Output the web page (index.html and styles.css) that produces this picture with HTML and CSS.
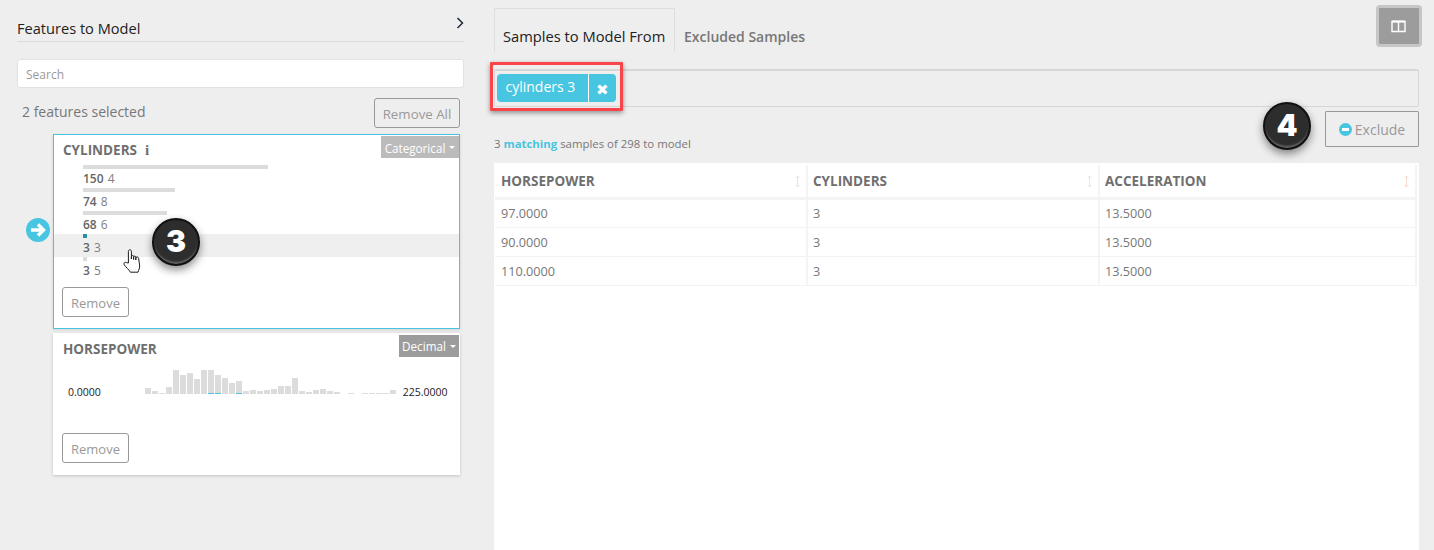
FILE: index.html
```html
<!DOCTYPE html>
<html lang="en">
<head>
    <meta charset="UTF-8">
    <meta name="viewport" content="width=device-width, initial-scale=1.0">
    <title>Features to Model</title>
    <link rel="stylesheet" href="styles.css">
</head>
<body>
    <div class="page">
        <div class="features-panel">
            <div class="features-head">
                <h1>Features to Model</h1>
                <svg class="collapse-icon" width="8" height="12" viewBox="0 0 8 12"><path d="M1.5 1 L6.5 6 L1.5 11" fill="none" stroke="#1d2b3a" stroke-width="1.5"/></svg>
            </div>
            <input class="search-input" type="text" placeholder="Search">
            <div class="selected-row">
                <span class="selected-count">2 features selected</span>
                <button class="btn remove-all">Remove All</button>
            </div>

            <div class="feature-wrap">
                <svg class="current-arrow" width="26" height="26" viewBox="0 0 26 26">
                    <circle cx="13" cy="13" r="12" fill="#48c5e0"/>
                    <path d="M6 13 H18 M13 7.5 L18.5 13 L13 18.5" fill="none" stroke="#fff" stroke-width="3.4"/>
                </svg>
                <div class="feature-card active">
                    <div class="feature-title">
                        <span>CYLINDERS</span>
                        <span class="info-mark">i</span>
                        <span class="type-tag light">Categorical <i class="caret"></i></span>
                    </div>
                    <div class="cat-list">
                        <div class="cat-row"><div class="cat-bar" style="width:185px"></div><div class="cat-text"><b>150</b> 4</div></div>
                        <div class="cat-row"><div class="cat-bar" style="width:92px"></div><div class="cat-text"><b>74</b> 8</div></div>
                        <div class="cat-row"><div class="cat-bar" style="width:84px"></div><div class="cat-text"><b>68</b> 6</div></div>
                        <div class="cat-row hover"><div class="cat-bar teal" style="width:4px"></div><div class="cat-text"><b>3</b> 3</div></div>
                        <div class="cat-row"><div class="cat-bar" style="width:4px"></div><div class="cat-text"><b>3</b> 5</div></div>
                    </div>
                    <button class="btn remove">Remove</button>
                    <svg class="hand-cursor" width="18" height="24" viewBox="0 0 18 24">
                        <path d="M5.4 14 V2.4 C5.4 .2 8.4 .2 8.4 2.4 V10 V7.6 C8.4 6 10.6 6 10.6 7.6 V10.5 V8.2 C10.6 6.8 12.8 6.8 12.8 8.2 V11 V9 C12.8 7.6 15.4 7.6 15.6 9.2 L16.6 16 C17 19 15.6 21 15 23.2 H7.4 C6 20.6 3.2 18.6 1.2 15.8 C.2 14.2 2 12.6 3.4 13.6 Z" fill="#fff" stroke="#1c1c1c" stroke-width="1" stroke-linejoin="round"/>
                    </svg>
                    <div class="step-badge step-three">3</div>
                </div>
            </div>

            <div class="feature-wrap">
                <div class="feature-card second">
                    <div class="feature-title">
                        <span>HORSEPOWER</span>
                        <span class="type-tag dark">Decimal <i class="caret"></i></span>
                    </div>
                    <div class="histogram-row">
                        <span class="range-val">0.0000</span>
                        <div class="histogram" id="histogram"></div>
                        <span class="range-val">225.0000</span>
                    </div>
                    <button class="btn remove">Remove</button>
                </div>
            </div>
        </div>

        <div class="samples-panel">
            <div class="tabs">
                <div class="tab active">Samples to Model From</div>
                <div class="tab">Excluded Samples</div>
                <button class="layout-toggle">
                    <svg width="15" height="13" viewBox="0 0 15 13"><path d="M1 1.5 H14 V11.5 H1 Z M7.5 1.5 V11.5" fill="none" stroke="#fff" stroke-width="1.4"/><path d="M1 1.5 H14" stroke="#fff" stroke-width="2"/></svg>
                </button>
            </div>
            <div class="filter-box">
                <div class="chip-mark">
                    <div class="chip">
                        <span class="chip-label">cylinders 3</span>
                        <span class="chip-close">✖</span>
                    </div>
                </div>
            </div>
            <div class="match-row">
                <span class="match-text">3 <b>matching</b> samples of 298 to model</span>
                <div class="step-badge step-four">4</div>
                <button class="btn exclude"><i class="minus-icon"></i>Exclude</button>
            </div>
            <div class="table-panel">
                <table class="sample-table">
                    <thead>
                        <tr>
                            <th>HORSEPOWER<svg class="sort-icon" width="7" height="13" viewBox="0 0 7 13"><path d="M3.5 1 V12 M1.5 3 L3.5 1 L5.5 3 M1.5 10 L3.5 12 L5.5 10" fill="none" stroke="#dde7f0"/></svg></th>
                            <th>CYLINDERS<svg class="sort-icon" width="7" height="13" viewBox="0 0 7 13"><path d="M3.5 1 V12 M1.5 3 L3.5 1 L5.5 3 M1.5 10 L3.5 12 L5.5 10" fill="none" stroke="#dde7f0"/></svg></th>
                            <th>ACCELERATION<svg class="sort-icon" width="7" height="13" viewBox="0 0 7 13"><path d="M3.5 1 V12 M1.5 3 L3.5 1 L5.5 3 M1.5 10 L3.5 12 L5.5 10" fill="none" stroke="#f2dccf"/></svg></th>
                        </tr>
                    </thead>
                    <tbody>
                        <tr><td>97.0000</td><td>3</td><td>13.5000</td></tr>
                        <tr><td>90.0000</td><td>3</td><td>13.5000</td></tr>
                        <tr><td>110.0000</td><td>3</td><td>13.5000</td></tr>
                    </tbody>
                </table>
            </div>
        </div>
    </div>

    <script>
    // horsepower distribution, bar heights in px
    const heights = [6,3,1,7,24,19,21,15,24,24,19,16,11,13,3,4,3,4,5,8,8,16,3,2,4,5,3,2,0,1,0,1,1,1,1,4];
    const matched = [9,10,13];
    const histogram = document.getElementById('histogram');
    heights.forEach(function(h, i) {
        const bar = document.createElement('div');
        bar.className = matched.includes(i) ? 'hist-bar hit' : 'hist-bar';
        bar.style.height = h + 'px';
        histogram.appendChild(bar);
    });
    </script>
</body>
</html>
```

FILE: styles.css
```css
*, *::after {
    box-sizing: border-box;
}
html, body {
    height: 100%;
}
body {
    margin: 0;
    background-color: #eeeeee;
    font-family: "Open Sans", "Noto Sans", Arial, sans-serif;
    color: #777;
    overflow: hidden;
}
.page {
    display: flex;
    height: 550px;
    padding-left: 17px;
}
.features-panel {
    width: 447px;
    flex: none;
}
.features-head {
    display: flex;
    justify-content: space-between;
    height: 42px;
    padding-top: 18px;
    border-bottom: 1px solid #dcdcdc;
}
.features-head h1 {
    margin: 0;
    font-size: 14.6px;
    line-height: 20px;
    font-weight: 500;
    color: #222;
}
.collapse-icon {
    margin: -1px 0 0 0;
}
.search-input {
    display: block;
    width: 100%;
    height: 29px;
    margin-top: 17px;
    padding: 1px 8px 0;
    background: #fff;
    border: 1px solid #e2e2e2;
    border-radius: 3px;
    font-family: inherit;
    font-size: 12px;
}
.search-input::placeholder {
    color: #999;
}
.selected-row {
    display: flex;
    justify-content: space-between;
    align-items: flex-start;
    margin-top: 10px;
    padding: 0 4px;
    height: 36px;
}
.selected-count {
    font-size: 14px;
    line-height: 28px;
    color: #777;
    padding-left: 1px;
}
.btn {
    background: transparent;
    border: 1px solid #999;
    border-radius: 3px;
    font-family: inherit;
    font-size: 13px;
    color: #999;
    padding: 0;
}
.remove-all {
    width: 86px;
    height: 30px;
    padding-top: 1px;
    font-size: 13.3px;
}
.feature-wrap {
    position: relative;
    margin-left: 36px;
    width: 407px;
    margin-bottom: 4px;
}
.current-arrow {
    position: absolute;
    left: -28px;
    top: 83px;
}
.feature-card {
    position: relative;
    background: #fff;
    padding: 0 0 0 9px;
}
.feature-card.active {
    height: 195px;
    border: 1px solid #48c5e0;
    box-shadow: 0 1px 3px rgba(0, 0, 0, 0.12);
}
.feature-card.second {
    height: 142px;
    box-shadow: 0 1px 3px rgba(0, 0, 0, 0.18);
    padding-left: 10px;
}
.feature-title {
    display: flex;
    align-items: center;
    height: 30px;
    font-size: 13.5px;
    font-weight: 700;
    color: #6f6f6f;
}
.second .feature-title {
    height: 31px;
}
.info-mark {
    margin-left: 8px;
    font-family: "Liberation Serif", serif;
    font-size: 15px;
    font-weight: 700;
}
.type-tag {
    position: absolute;
    right: 0;
    top: 1px;
    height: 22px;
    display: flex;
    align-items: center;
    justify-content: center;
    gap: 4px;
    color: #fff;
    font-size: 11.7px;
    font-weight: 400;
    white-space: nowrap;
}
.second .type-tag {
    top: 2px;
    right: 1px;
}
.type-tag.light {
    width: 78px;
    padding-top: 1px;
    background: #bbbbbb;
}
.type-tag.dark {
    width: 60px;
    background: #9c9c9c;
}
.caret {
    width: 0;
    height: 0;
    border-left: 3.5px solid transparent;
    border-right: 3.5px solid transparent;
    border-top: 3.5px solid #fff;
}
.cat-list {
    margin-left: -9px;
}
.cat-row {
    height: 23px;
    padding-left: 29px;
}
.cat-row.hover {
    background: #efefef;
}
.cat-bar {
    height: 4px;
    background: #dcdcdc;
}
.cat-bar.teal {
    background: #2b8da5;
}
.cat-text {
    font-size: 12px;
    line-height: 19px;
    color: #808080;
}
.cat-text b {
    font-weight: 600;
    color: #666;
    margin-right: 1px;
}
.feature-card .remove {
    display: block;
    width: 67px;
    height: 30px;
    padding-top: 1px;
    margin-left: -1px;
}
.active .remove {
    margin-top: 7px;
}
.histogram-row {
    display: flex;
    align-items: flex-end;
    height: 30px;
    margin-left: 5px;
}
.range-val {
    flex: none;
    font-size: 10.5px;
    line-height: 14px;
    color: #222;
    margin-bottom: -5px;
}
.histogram {
    display: flex;
    align-items: flex-end;
    gap: 1px;
    width: 252px;
    height: 24px;
    margin-left: 44px;
}
.hist-bar {
    width: 6px;
    flex: none;
    background: #dcdcdc;
}
.hist-bar.hit {
    border-bottom: 1px solid #48c5e0;
}
.histogram + .range-val {
    margin-left: 6px;
}
.second .remove {
    margin-top: 39px;
}
.hand-cursor {
    position: absolute;
    left: 69px;
    top: 114px;
}
.step-badge {
    width: 48px;
    height: 48px;
    border-radius: 50%;
    background: #2d2d2d;
    border: 2px solid #111;
    box-shadow: inset 0 -3px 2px -1px #666, 0 4px 8px rgba(0, 0, 0, 0.45);
    color: #fff;
    font-family: Inter, "Open Sans", sans-serif;
    font-weight: 900;
    font-size: 30px;
    line-height: 43px;
    text-align: center;
}
.step-three {
    position: absolute;
    left: 98px;
    top: 83px;
}
.samples-panel {
    width: 925px;
    margin-left: 30px;
    flex: none;
    position: relative;
}
.tabs {
    display: flex;
    height: 69px;
    padding-top: 8px;
    align-items: flex-start;
}
.tab {
    height: 44px;
    padding: 0 9px;
    font-size: 14px;
    font-weight: 600;
    line-height: 57px;
    color: #777;
}
.tab.active {
    color: #222;
    border: 1px solid #dedede;
    border-bottom: none;
    width: 181px;
    padding: 0 8px;
    font-size: 14.7px;
    font-weight: 500;
    line-height: 55px;
    white-space: nowrap;
}
.layout-toggle {
    position: absolute;
    right: -3px;
    top: 5px;
    width: 46px;
    height: 42px;
    padding: 0 2px 0 0;
    background: #9c9c9c;
    border: 3px solid #c6c6c6;
    border-radius: 4px;
    display: flex;
    align-items: center;
    justify-content: center;
}
.filter-box {
    height: 38px;
    border: 1px solid #d6d6d6;
    border-top-width: 2px;
    border-radius: 2px;
    padding: 3px 0 0 2px;
}
.chip-mark {
    position: relative;
    width: 119px;
}
.chip-mark::after {
    content: "";
    position: absolute;
    left: -7px;
    top: -12px;
    width: 133px;
    height: 49px;
    border: 3px solid #f94449;
    box-shadow: 0 2px 5px rgba(0, 0, 0, 0.4);
    border-radius: 1px;
}
.chip {
    display: flex;
    height: 28px;
    background: #48c5e0;
    border-radius: 4px;
    color: #fff;
    font-size: 14px;
}
.chip-label {
    width: 92px;
    padding-left: 8.5px;
    line-height: 25px;
    border-right: 1px solid #fff;
}
.chip-close {
    flex: 1;
    text-align: center;
    font-size: 15px;
    line-height: 30px;
}
.match-row {
    position: relative;
    display: flex;
    justify-content: space-between;
    height: 56px;
}
.match-text {
    margin-top: 29px;
    font-size: 11.4px;
    line-height: 16px;
    color: #777;
}
.match-text b {
    color: #48c5e0;
    font-weight: 700;
}
.step-four {
    position: absolute;
    left: 769px;
    top: -5px;
}
.exclude {
    width: 94px;
    height: 36px;
    margin-top: 4px;
    font-size: 14px;
    border-radius: 1px;
    display: flex;
    align-items: center;
    justify-content: center;
    gap: 3px;
}
.minus-icon {
    position: relative;
    width: 13px;
    height: 13px;
    border-radius: 50%;
    background: #48c5e0;
}
.minus-icon::after {
    content: "";
    position: absolute;
    left: 3px;
    top: 5px;
    width: 7px;
    height: 3px;
    background: #fff;
}
.table-panel {
    height: 387px;
    background: #fff;
    padding: 2px 2px 0 1px;
}
.sample-table {
    width: 100%;
    border-collapse: collapse;
    table-layout: fixed;
}
.sample-table th {
    position: relative;
    height: 33px;
    padding: 0 6px;
    text-align: left;
    font-size: 13.5px;
    font-weight: 700;
    color: #6f6f6f;
    border-right: 2px solid #f4f4f4;
    border-bottom: 3px solid #f4f4f4;
}
.sample-table th:nth-child(1), .sample-table td:nth-child(1) {
    width: 312px;
}
.sample-table th:nth-child(2), .sample-table td:nth-child(2) {
    width: 292px;
}
.sample-table td {
    height: 29px;
    padding: 0 6px;
    font-size: 12.7px;
    color: #777;
    border-right: 2px solid #f4f4f4;
    border-bottom: 1px solid #f2f2f2;
}
.sample-table th + th, .sample-table td + td {
    padding-left: 5px;
}
.sort-icon {
    position: absolute;
    right: 5px;
    top: 10px;
}
```
